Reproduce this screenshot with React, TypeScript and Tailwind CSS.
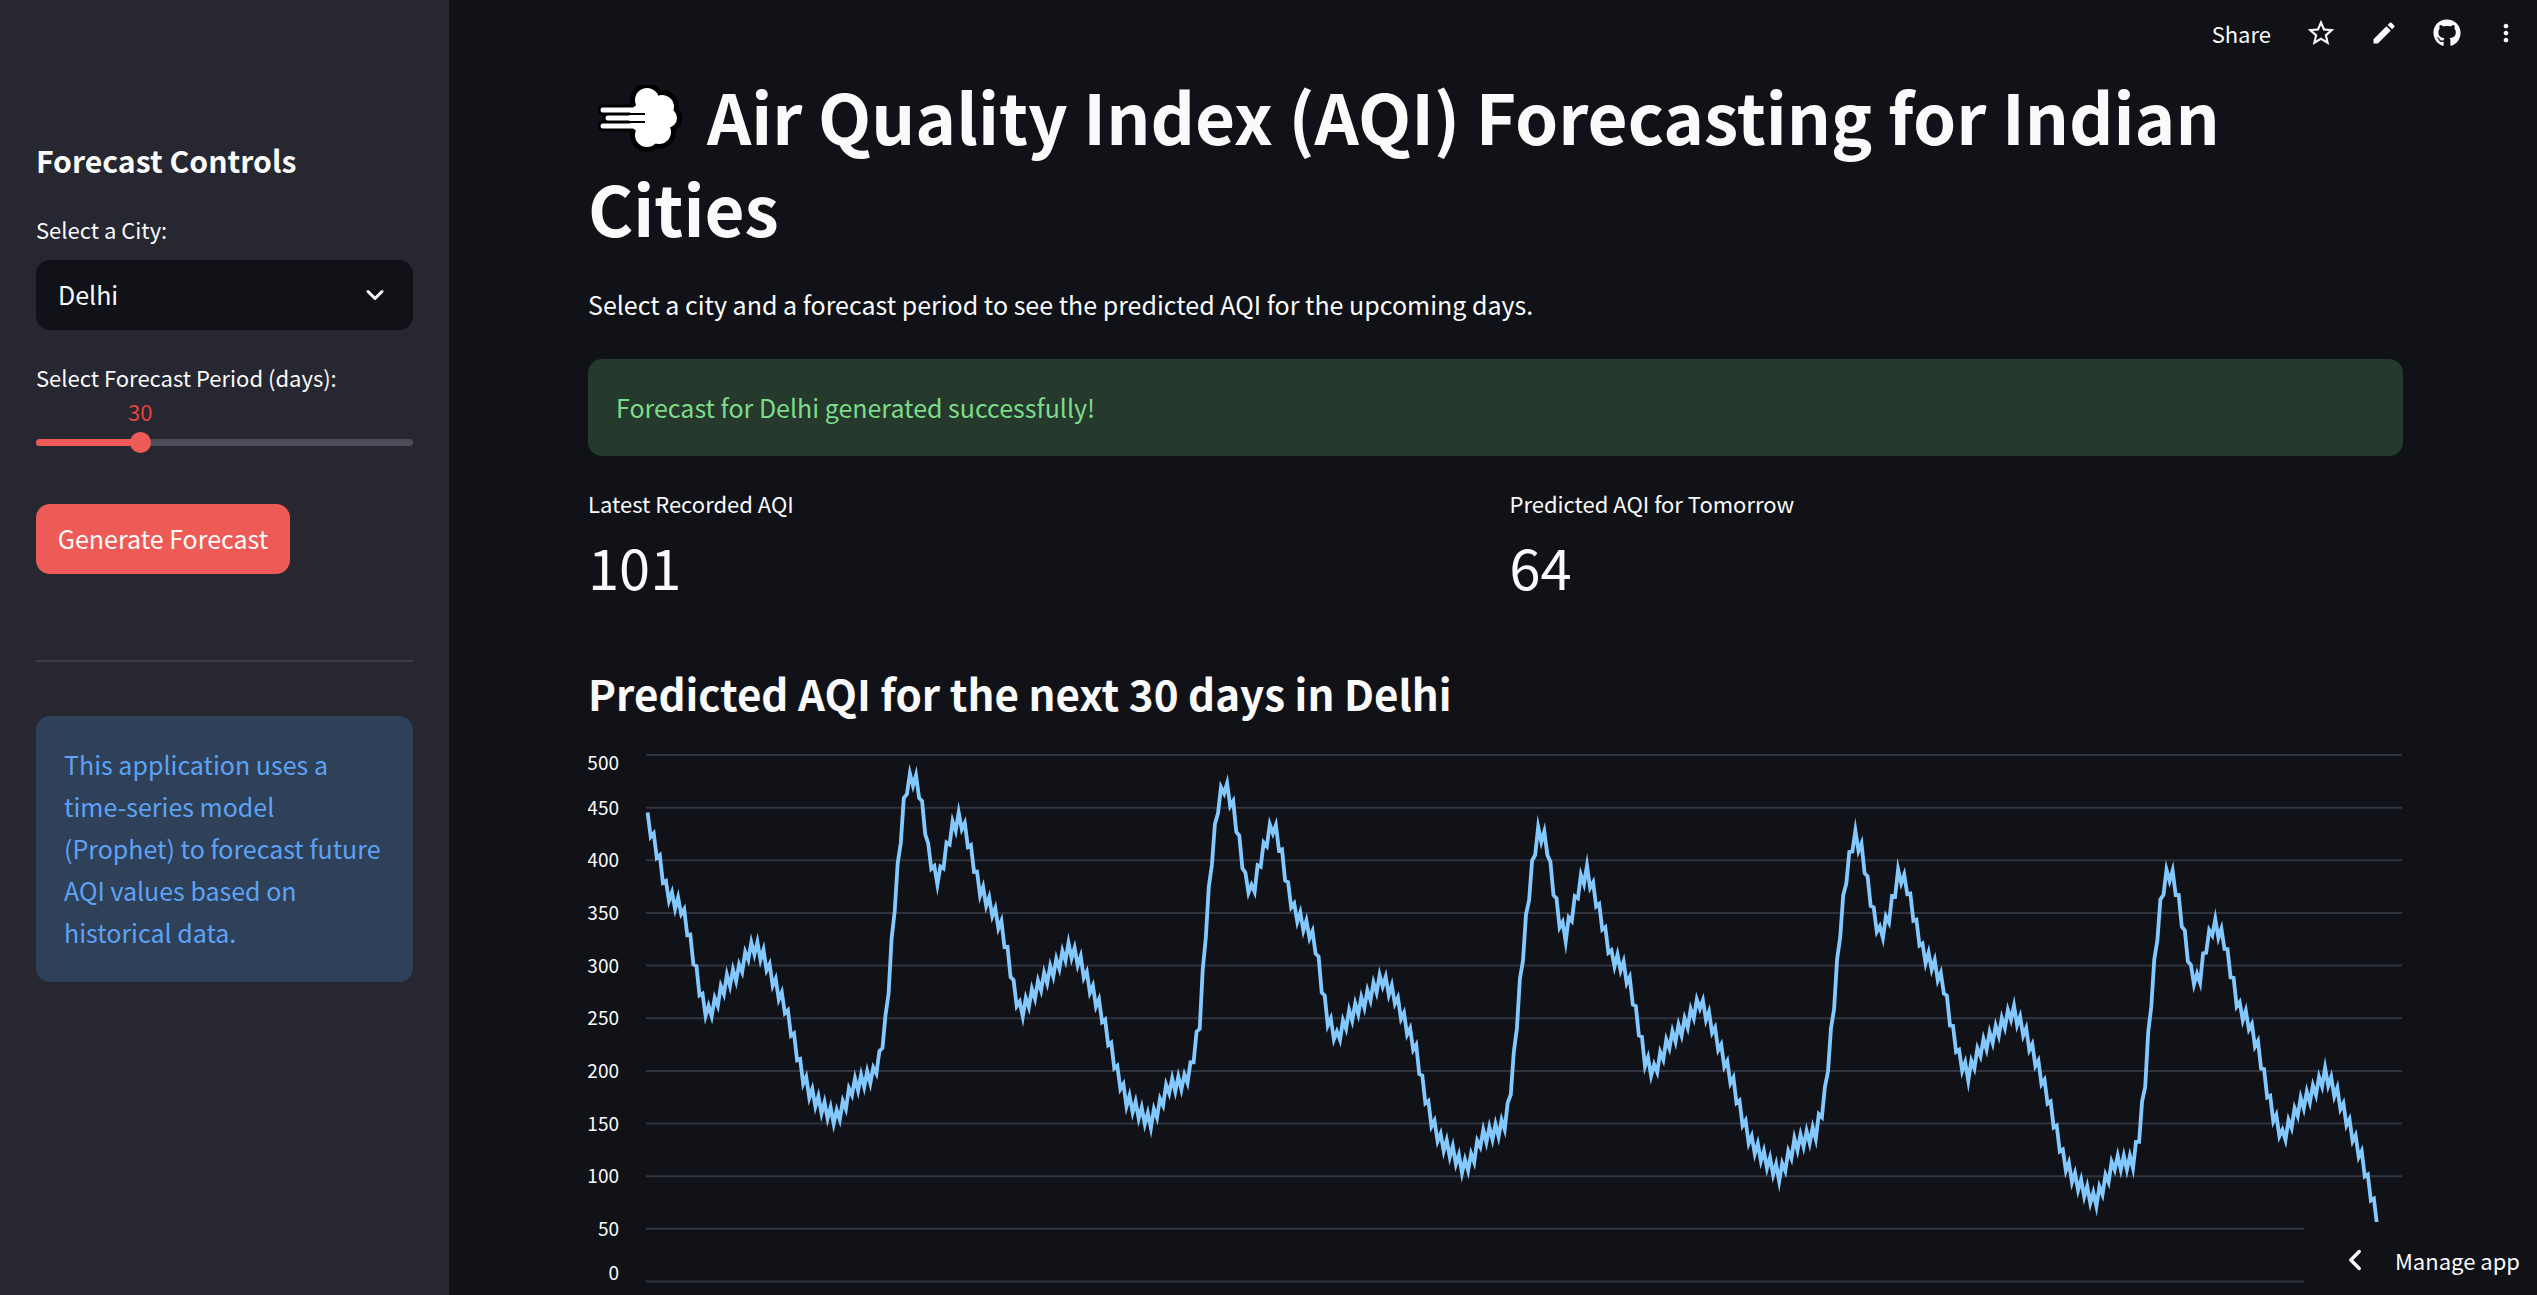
import { ChevronDown, ChevronLeft } from "lucide-react";
import { FaGithub } from "react-icons/fa";
import { MdEdit, MdMoreVert, MdStarBorder } from "react-icons/md";

const font = "font-['Noto_Sans_CJK_SC','Noto_Sans',sans-serif]";

// ── Chart data ──────────────────────────────────────
// Midline of the forecast, traced from three crops of the chart.
// Each trace has its own origin and scale; see toPage below.

const TRACE_A = [163,230,190,340,205,420,220,455,245,480,262,560,275,640,290,730,305,780,320,760,350,690,380,660,405,600,420,590,440,620,460,680,490,760,510,850,530,950,550,1005,575,1040,610,1075,630,1040,650,985,680,965,700,950,715,900,730,790,750,470,765,270,775,150,790,110,805,130,820,230,830,320,845,385,855,400,870,330,885,260,905,225,920,270,935,340,950,420,965,450,985,490,1005,540,1020,620,1035,720,1050,775,1075,730,1100,690,1130,650,1165,595,1190,630,1210,690,1240,770,1260,860,1280,950,1300,1020,1325,1050,1357,1085,1380,1040,1400,985,1440,970,1455,930,1475,800,1490,530,1505,320,1520,175,1535,130,1555,200];
const TRACE_B = [0,290,15,400,32,440,50,350,70,270,83,245,100,320,115,420,130,485,150,520,170,550,185,600,195,690,210,790,232,850,260,790,300,740,340,680,370,730,400,820,420,880,440,1000,460,1090,480,1140,510,1175,533,1215,555,1190,575,1130,620,1105,635,1080,650,950,665,730,685,480,700,330,712,265,730,290,745,410,760,510,775,560,795,480,810,410,827,380,845,440,865,530,885,620,910,640,930,700,950,820,965,910,985,945,1020,860,1060,810,1095,745,1120,800,1150,900,1175,980,1195,1070,1215,1140,1250,1190,1285,1235,1320,1150,1370,1115,1390,1030,1410,800,1430,520,1445,370,1462,275,1480,320,1495,420,1510,510,1525,560,1545,500];
const TRACE_C = [0,380,20,420,40,520,60,610,85,640,110,700,130,820,150,910,170,950,200,880,240,830,280,770,310,830,340,920,365,1010,385,1100,405,1190,430,1245,455,1275,483,1310,510,1250,530,1200,575,1200,590,1130,605,980,620,750,640,500,655,395,670,380,685,440,700,540,720,670,738,690,755,590,775,525,800,570,815,650,835,760,860,800,885,880,905,990,920,1060,945,1130,985,1040,1020,1000,1050,950,1080,1010,1110,1100,1140,1190,1160,1280,1178,1363];

function toPage(trace: number[], x0: number, kx: number) {
  const out: [number, number][] = [];
  for (let i = 0; i < trace.length; i += 2) {
    out.push([x0 + trace[i] / kx, 740 + trace[i + 1] / 2.825]);
  }
  return out;
}

const MIDLINE = [
  ...toPage(TRACE_A, 580, 2.376),
  ...toPage(TRACE_B, 1240, 2.376),
  ...toPage(TRACE_C, 1900, 2.4615),
];

/** Resamples the midline and adds the fast saw-tooth the forecast shows. */
function buildLine() {
  const step = 3.05;
  const pts: string[] = [];
  let seg = 0;
  let i = 0;
  for (let x = MIDLINE[0][0]; x <= MIDLINE[MIDLINE.length - 1][0]; x += step) {
    while (seg < MIDLINE.length - 2 && MIDLINE[seg + 1][0] < x) seg++;
    const [x1, y1] = MIDLINE[seg];
    const [x2, y2] = MIDLINE[seg + 1];
    const y = y1 + ((y2 - y1) * (x - x1)) / (x2 - x1);
    pts.push(`${x.toFixed(1)},${(y + (i % 2 ? 7 : -7)).toFixed(1)}`);
    i++;
  }
  return pts.join(" ");
}

const LINE = buildLine();
const TICKS = [500, 450, 400, 350, 300, 250, 200, 150, 100, 50, 0];
const tickY = (v: number) => 1283.5 - v * 1.053;

function Chart() {
  return (
    <svg viewBox="589 745 1814 550" className="mt-[20px] block h-[550px] w-[1814px]">
      {TICKS.map((v) => (
        <g key={v}>
          <line x1="647" x2="2403" y1={tickY(v)} y2={tickY(v)} stroke="#31333f" strokeWidth="2" />
          <text
            x="620"
            y={v === 500 ? 772 : v === 0 ? 1282 : tickY(v) + 7}
            textAnchor="end"
            className="fill-[#fafafa] text-[19px]"
          >
            {v}
          </text>
        </g>
      ))}
      <polyline
        points={LINE}
        fill="none"
        stroke="#83c9ff"
        strokeWidth="3.8"
        strokeLinejoin="miter"
        strokeMiterlimit="10"
      />
    </svg>
  );
}

function WindIcon() {
  const lobes = [
    [50, 15, 12],
    [65, 22, 12],
    [70, 33, 10],
    [62, 47, 12],
    [50, 50, 12],
    [47, 33, 15],
  ];
  return (
    <svg viewBox="0 0 85 67" className="mr-[25px] ml-[9px] inline-block h-[67px] w-[85px] align-[-7px]">
      {lobes.map(([cx, cy, r]) => (
        <circle key={`${cx}-${cy}`} cx={cx} cy={cy} r={r + 5} fill="#000" />
      ))}
      <g stroke="#000" strokeWidth="11" strokeLinecap="round">
        <line x1="6" x2="40" y1="25" y2="25" />
        <line x1="11" x2="40" y1="32" y2="32" />
        <line x1="6" x2="40" y1="41" y2="41" />
      </g>
      {lobes.map(([cx, cy, r]) => (
        <circle key={`${cx}-${cy}-w`} cx={cx} cy={cy} r={r} fill="#fff" />
      ))}
      <g stroke="#fff" strokeWidth="5" strokeLinecap="round">
        <line x1="6" x2="44" y1="25" y2="25" />
        <line x1="11" x2="44" y1="33" y2="33" />
        <line x1="6" x2="44" y1="41" y2="41" />
      </g>
      <g stroke="#000" strokeWidth="2">
        <line x1="30" x2="48" y1="29" y2="29" />
        <line x1="30" x2="48" y1="37" y2="37" />
      </g>
    </svg>
  );
}

function Sidebar() {
  return (
    <aside className="flex w-[449px] shrink-0 flex-col bg-[#262730] px-9 pt-[137px]">
      <h2 className="text-[30.2px] leading-[46px] font-bold">Forecast Controls</h2>

      <label className="mt-[29px] text-[22px] leading-[34px]">Select a City:</label>
      <div className="mt-[14px] flex h-[70px] items-center justify-between rounded-[14px] bg-[#101218] pr-[24px] pl-[22px]">
        <span className="text-[25px]">Delhi</span>
        <ChevronDown className="h-[28px] w-[28px]" strokeWidth={2.6} />
      </div>

      <label className="mt-[30px] text-[22px] leading-[34px]">Select Forecast Period (days):</label>
      {/* Slider */}
      <div className="relative mt-[45px] h-[7px] rounded-full bg-[#4c4c58]">
        <div className="h-full w-[104px] rounded-full bg-[#ee5a55]" />
        <div className="absolute top-[-7px] left-[94px] h-[21px] w-[21px] rounded-full bg-[#ee5a55]" />
        <span className="absolute top-[-45px] left-[92px] text-[22px] leading-[34px] text-[#e5433f]">30</span>
      </div>

      <button className="mt-[58px] flex h-[70px] w-[254px] items-center justify-center rounded-[14px] bg-[#ee5a55] text-[25px]">
        Generate Forecast
      </button>

      <hr className="mt-[86px] border-t-2 border-[#3d3e49]" />

      <div className="mt-[54px] rounded-[14px] bg-[#2f4059] px-7 pt-[27px] pb-[29px] text-[25px] leading-[42px] text-[#5ea2f5]">
        This application uses a time-series model (Prophet) to forecast future AQI values based on historical data.
      </div>
    </aside>
  );
}

export default function App() {
  return (
    <div className={`relative flex h-screen w-full overflow-hidden bg-[#101218] text-[#fafafa] ${font}`}>
      <Sidebar />

      <main className="min-w-0 flex-1">
        {/* Toolbar */}
        <header className="flex h-[69px] items-center justify-end pr-[4px] pb-[3px]">
          <span className="mr-[18px] text-[22px]">Share</span>
          <span className="flex w-[63px] justify-center">
            <MdStarBorder className="h-[32px] w-[32px]" />
          </span>
          <span className="flex w-[63px] justify-center">
            <MdEdit className="h-[28px] w-[28px]" />
          </span>
          <span className="flex w-[63px] justify-center">
            <FaGithub className="h-[28px] w-[28px]" />
          </span>
          <span className="flex w-[55px] justify-center">
            <MdMoreVert className="h-[28px] w-[28px]" />
          </span>
        </header>

        <div className="mr-[134px] ml-[139px] flex flex-col">
          <h1 className="text-[69.1px] leading-[92px] font-bold">
            <WindIcon />
            Air Quality Index (AQI) Forecasting for Indian Cities
          </h1>

          <p className="mt-[30px] text-[25px] leading-[42px]">
            Select a city and a forecast period to see the predicted AQI for the upcoming days.
          </p>

          <div className="mt-[34px] flex h-[97px] items-center rounded-[14px] bg-[#25392c] px-7 text-[25px] text-[#7ddc8a]">
            Forecast for Delhi generated successfully!
          </div>

          <div className="mt-[30px] grid grid-cols-2 gap-[28px]">
            {[
              ["Latest Recorded AQI", "101"],
              ["Predicted AQI for Tomorrow", "64"],
            ].map(([label, value]) => (
              <div key={label}>
                <p className="text-[22px] leading-[34px]">{label}</p>
                <p className="mt-[6px] text-[56px] leading-[80px]">{value}</p>
              </div>
            ))}
          </div>

          <h3 className="mt-[57px] text-[42.1px] leading-[60px] font-bold">
            Predicted AQI for the next 30 days in Delhi
          </h3>

          <Chart />
        </div>
      </main>

      {/* Manage app sits over the chart */}
      <div className="absolute right-0 bottom-0 flex h-[73px] w-[233px] items-center bg-[#101218] pt-[3px] pl-[34px]">
        <ChevronLeft className="h-[34px] w-[34px]" strokeWidth={2.4} />
        <span className="ml-[23px] text-[22px] whitespace-nowrap">Manage app</span>
      </div>
    </div>
  );
}
